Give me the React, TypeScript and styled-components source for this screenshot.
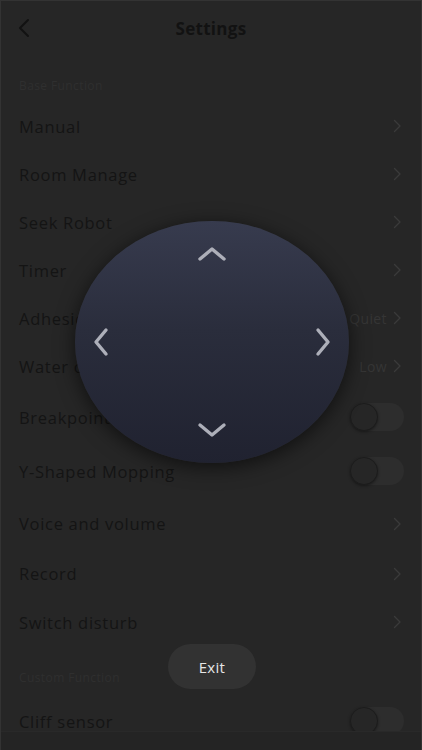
import styled, { createGlobalStyle } from "styled-components";

const GlobalStyle = createGlobalStyle`
  html, body {
    margin: 0;
    padding: 0;
    background: #262626;
  }
  * {
    box-sizing: border-box;
  }
`;

const Screen = styled.div`
  position: relative;
  width: 422px;
  height: 750px;
  overflow: hidden;
  background: #262626;
  border-left: 1px solid #333333;
  border-right: 1px solid #333333;
  border-top: 1px solid #333333;
  font-family: "Open Sans", "Liberation Sans", sans-serif;
  color: #141414;
`;

const Header = styled.div`
  height: 54px;
  display: flex;
  align-items: center;
  justify-content: center;
  position: relative;
`;

const BackButton = styled.div`
  position: absolute;
  left: 16px;
  top: 17px;
  width: 14px;
  height: 20px;
  display: flex;
`;

const Title = styled.h1`
  margin: 0;
  font-size: 17px;
  font-weight: 700;
  letter-spacing: 0.3px;
  color: #121212;
`;

// section caption block: $top is space above the text, $h the full block height
const SectionLabel = styled.div<{ $top: number; $h: number }>`
  padding: ${(p) => p.$top}px 18px 0;
  height: ${(p) => p.$h}px;
  font-size: 12px;
  line-height: 16px;
  letter-spacing: 0.4px;
  color: #2f2f2f;
`;

const Row = styled.div<{ $h?: number }>`
  height: ${(p) => p.$h ?? 48}px;
  display: flex;
  align-items: center;
  justify-content: space-between;
  padding: 0 19px 0 18px;
`;

const Label = styled.span`
  font-size: 16.5px;
  letter-spacing: 0.7px;
  color: #141414;
`;

const Trailing = styled.div`
  display: flex;
  align-items: center;
  gap: 6px;
`;

const Value = styled.span`
  font-size: 14px;
  letter-spacing: 0.4px;
  color: #353535;
`;

const Toggle = styled.div`
  position: relative;
  width: 54px;
  height: 28px;
  margin-right: -2px;
  border-radius: 14px;
  background: #2d2d2d;
`;

const Knob = styled.div`
  position: absolute;
  left: 0;
  top: 0;
  width: 28px;
  height: 28px;
  border-radius: 50%;
  background: #262626;
  border: 1px solid #1c1c1c;
  box-shadow: 0 1px 3px rgba(0, 0, 0, 0.4);
`;

const HomeBar = styled.div`
  position: absolute;
  left: 0;
  right: 0;
  bottom: 0;
  height: 19px;
  background: #242424;
  border-top: 1px solid #292929;
`;

const Pad = styled.div`
  position: absolute;
  left: 74px;
  top: 220px;
  width: 274px;
  height: 242px;
  border-radius: 50%;
  background: linear-gradient(180deg, #373b4e 0%, #2a2d3c 45%, #202230 100%);
  box-shadow: 0 4px 20px rgba(0, 0, 0, 0.6);
  display: grid;
  grid-template-columns: 52px 1fr 52px;
  grid-template-rows: 66px 1fr 66px;
  place-items: center;
`;

const Arrow = styled.div<{ $col: number; $row: number }>`
  grid-column: ${(p) => p.$col};
  grid-row: ${(p) => p.$row};
  display: flex;
`;

const ExitButton = styled.div`
  position: absolute;
  left: 167px;
  top: 643px;
  width: 88px;
  height: 45px;
  border-radius: 23px;
  background: #323232;
  color: #e6e6e6;
  font-size: 15px;
  letter-spacing: 0.3px;
  display: flex;
  align-items: center;
  justify-content: center;
`;

const Chevron = () => (
  <svg width="9" height="14" viewBox="0 0 9 14">
    <path d="M1.5 1.5 L7 7 L1.5 12.5" fill="none" stroke="#3a3a3a" strokeWidth="1.4" strokeLinecap="round" strokeLinejoin="round" />
  </svg>
);

type Item = { label: string; value?: string; toggle?: boolean; h?: number };

const baseItems: Item[] = [
  { label: "Manual" },
  { label: "Room Manage" },
  { label: "Seek Robot" },
  { label: "Timer" },
  { label: "Adhesion", value: "Quiet" },
  { label: "Water output", value: "Low" },
  { label: "Breakpoint", toggle: true, h: 54 },
  { label: "Y-Shaped Mopping", toggle: true, h: 54 },
  { label: "Voice and volume", h: 51 },
  { label: "Record", h: 49 },
  { label: "Switch disturb" },
];

const customItems: Item[] = [{ label: "Cliff sensor", toggle: true, h: 54 }];

const renderRow = (item: Item) => (
  <Row key={item.label} $h={item.h}>
    <Label>{item.label}</Label>
    {item.toggle ? (
      <Toggle>
        <Knob />
      </Toggle>
    ) : (
      <Trailing>
        {item.value && <Value>{item.value}</Value>}
        <Chevron />
      </Trailing>
    )}
  </Row>
);

const padStroke = {
  fill: "none",
  stroke: "#adafb9",
  strokeWidth: 3.4,
  strokeLinecap: "round" as const,
  strokeLinejoin: "round" as const,
};

export default function App() {
  return (
    <>
      <GlobalStyle />
      <Screen>
        <Header>
          <BackButton>
            <svg width="14" height="20" viewBox="0 0 14 20">
              <path d="M11 2 L3 10 L11 18" fill="none" stroke="#121212" strokeWidth="2" strokeLinecap="round" strokeLinejoin="round" />
            </svg>
          </BackButton>
          <Title>Settings</Title>
        </Header>
        <SectionLabel $top={23} $h={47}>Base Function</SectionLabel>
        {baseItems.map(renderRow)}
        <SectionLabel $top={24} $h={48}>Custom Function</SectionLabel>
        {customItems.map(renderRow)}

        <HomeBar />

        <Pad>
          <Arrow $col={2} $row={1}>
            <svg width="30" height="18" viewBox="0 0 30 18">
              <path d="M3 14 L15 4 L27 14" {...padStroke} />
            </svg>
          </Arrow>
          <Arrow $col={1} $row={2}>
            <svg width="18" height="30" viewBox="0 0 18 30">
              <path d="M14 3 L4 15 L14 27" {...padStroke} />
            </svg>
          </Arrow>
          <Arrow $col={3} $row={2}>
            <svg width="18" height="30" viewBox="0 0 18 30">
              <path d="M4 3 L14 15 L4 27" {...padStroke} />
            </svg>
          </Arrow>
          <Arrow $col={2} $row={3}>
            <svg width="30" height="18" viewBox="0 0 30 18">
              <path d="M3 4 L15 14 L27 4" {...padStroke} />
            </svg>
          </Arrow>
        </Pad>

        <ExitButton>Exit</ExitButton>
      </Screen>
    </>
  );
}
